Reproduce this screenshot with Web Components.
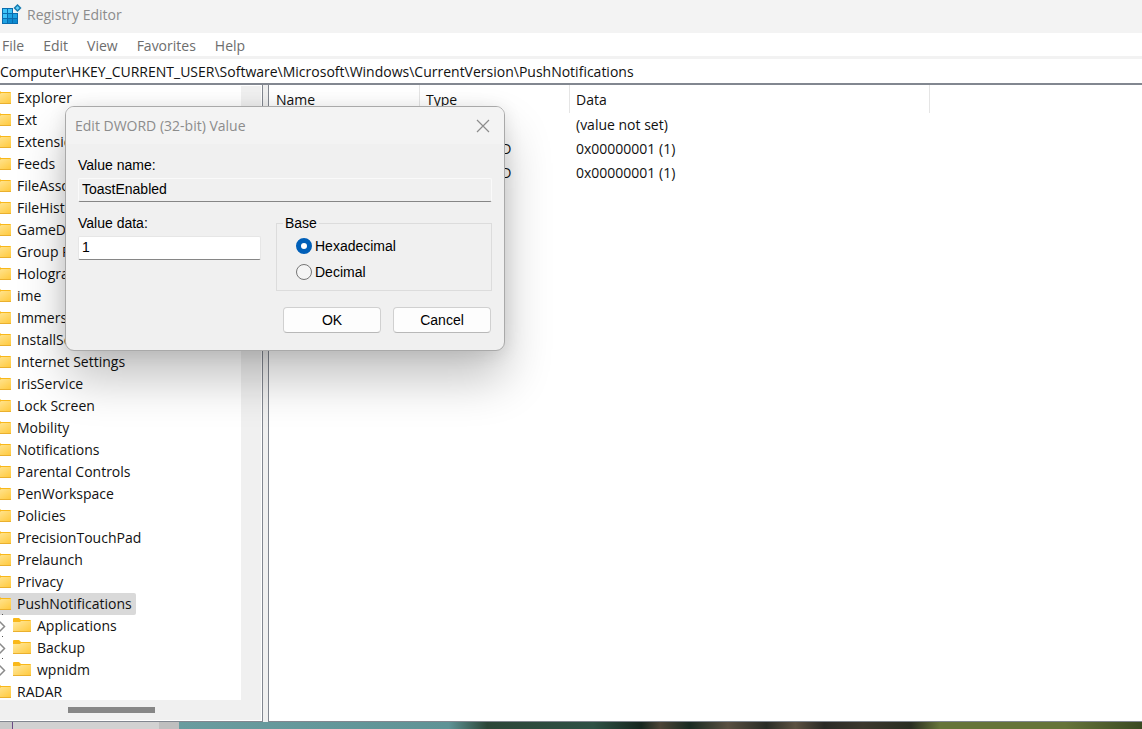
<!DOCTYPE html>
<html lang="en">
<head>
<meta charset="utf-8">
<title>Registry Editor</title>
<style>
  body {
    margin: 0;
    height: 100vh;
    display: flex;
    flex-direction: column;
    overflow: hidden;
    background: #fff;
    color: #111;
    font: 14px/22px "Open Sans", "Noto Sans", sans-serif;
  }
</style>
</head>
<body>

<registry-window></registry-window>
<desktop-strip></desktop-strip>

<dword-dialog name="ToastEnabled" value="1">Edit DWORD (32-bit) Value</dword-dialog>

<script>
class TitleBar extends HTMLElement {
  constructor() {
    super();
    this.attachShadow({ mode: 'open' }).innerHTML = `
    <style>
      :host {
        display: flex;
        align-items: flex-start;
        gap: 4px;
        height: 33px;
        padding-left: 1px;
        background: #f3f3f3;
        color: #8c8c8c;
      }
      svg { margin-top: 4px; }
      span { line-height: 30px; }
    </style>
    <svg width="22" height="20" viewBox="0 0 22 20" aria-hidden="true">
      <path fill="#0a6cae" d="M1 4h11v5h5v11H1z"/>
      <path fill="#3fc3f7" d="M2 5h4v4H2zM7 5h4v4H7zM2 10h4v4H2z"/>
      <path fill="#1fa2e2" d="M7 10h4v4H7zM12 10h4v4h-4zM2 15h4v4H2z"/>
      <path fill="#0d8ad0" d="M7 15h4v4H7zM12 15h4v4h-4z"/>
      <path fill="#1478ae" d="M16.500 0L20.500 4 16.500 8 12.500 4z"/>
      <path fill="#63d0f8" d="M16.500 2L18.500 4 16.500 6 14.500 4z"/>
    </svg>
    <span><slot></slot></span>
    `;
  }
}

class MenuBar extends HTMLElement {
  connectedCallback() {
    const items = this.getAttribute('items').split(',');
    this.attachShadow({ mode: 'open' }).innerHTML = `
    <style>
      :host {
        display: flex;
        gap: 19px;
        padding-left: 2px;
        height: 23px;
        border-bottom: 3px solid #f2f2f2;
        background: #fff;
      }
      button {
        border: 0;
        padding: 0;
        background: none;
        color: #6d6d6d;
        font: inherit;
        line-height: 25px;
      }
    </style>
    ${items.map((item) => `<button type="button">${item}</button>`).join('')}
    `;
  }
}

class AddressBar extends HTMLElement {
  connectedCallback() {
    this.attachShadow({ mode: 'open' }).innerHTML = `
    <style>
      :host {
        display: flex;
        height: 24px;
        border-bottom: 2px solid #828790;
      }
      input {
        flex: 1;
        border: 0;
        padding: 2px 0 0;
        outline: 0;
        background: #fff;
        color: inherit;
        font: inherit;
      }
    </style>
    <input type="text" aria-label="Address" value="${this.getAttribute('path')}">
    `;
  }
}

class TreeItem extends HTMLElement {
  constructor() {
    super();
    this.attachShadow({ mode: 'open' }).innerHTML = `
    <style>
      :host {
        display: flex;
        align-items: center;
        flex: none;
        width: fit-content;
        height: 22px;
        padding-right: 4px;
        white-space: nowrap;
      }
      :host([selected]) {
        background: #d9d9d9;
        border-radius: 2px;
      }
      :host([child]) { padding-left: 4px; }
      .arrow { display: none; overflow: visible; margin-right: 8px; }
      :host([child]) .arrow { display: block; }
      .folder { margin: 0 6px 2px 0; }
    </style>
    <svg class="arrow" width="8" height="22" viewBox="0 0 8 22" aria-hidden="true">
      <path d="M2.500 6.500l5 5-5 5" fill="none" stroke="#8a8a8a" stroke-width="1.500"/>
      <path d="M5 -1h1v1h-1z" fill="#555"/>
    </svg>
    <svg class="folder" width="18" height="14" viewBox="0 0 18 14" aria-hidden="true">
      <defs>
        <linearGradient id="g" x1="0" y1="0" x2="1" y2="1">
          <stop offset="0" stop-color="#ffe9a0"/>
          <stop offset="1" stop-color="#ffc83a"/>
        </linearGradient>
      </defs>
      <path fill="#f9b81a" d="M0 1q0-1 1-1h5l2 2h9q1 0 1 1v10H0z"/>
      <path fill="url(#g)" d="M0 4h7l1-1h10v10q0 1-1 1H1q-1 0-1-1z"/>
      <path fill="#eab02e" d="M0 13h18v1H0z"/>
    </svg>
    <span><slot></slot></span>
    `;
  }
}

class KeyTree extends HTMLElement {
  constructor() {
    super();
    this.attachShadow({ mode: 'open' }).innerHTML = `
    <style>
      :host {
        display: grid;
        grid-template-columns: 1fr 20px;
        grid-template-rows: 1fr 20px;
        width: 261px;
        flex: none;
        border: solid #828790;
        border-width: 0 1px 1px 0;
        padding: 0 1px 1px 0;
        background: #fff;
        overflow: hidden;
      }
      .items {
        display: flex;
        flex-direction: column;
        min-height: 0;
        overflow: hidden;
        padding-top: 2px;
      }
      ::slotted(tree-item) { margin-left: -7px; }
      .vertical { background: #f0f0f0; margin-top: 1px; }
      .horizontal {
        grid-column: 1 / 3;
        display: flex;
        align-items: center;
        background: #f0f0f0;
      }
      .thumb {
        width: 87px;
        height: 6px;
        margin-left: 68px;
        background: #868686;
      }
    </style>
    <div class="items"><slot></slot></div>
    <div class="vertical"></div>
    <div class="horizontal"><div class="thumb"></div></div>
    `;
  }
}

class ValueTable extends HTMLElement {
  connectedCallback() {
    const rows = [
      ['(Default)', 'REG_SZ', '(value not set)'],
      ['ToastEnabled', 'REG_DWORD', '0x00000001 (1)'],
      ['LockScreen', 'REG_DWORD', '0x00000001 (1)'],
    ];
    this.attachShadow({ mode: 'open' }).innerHTML = `
    <style>
      :host {
        display: block;
        flex: 1;
        min-width: 0;
        margin-left: 5px;
        border: solid #828790;
        border-width: 0 0 1px 1px;
        background: #fff;
      }
      table {
        table-layout: fixed;
        width: 661px;
        border-collapse: separate;
        border-spacing: 0;
      }
      th, td {
        box-sizing: border-box;
        height: 24px;
        padding: 0 0 0 6px;
        text-align: left;
        font-weight: normal;
        white-space: nowrap;
      }
      th {
        height: 28px;
        padding-top: 2px;
        border-right: 1px solid #e5e5e5;
      }
      th:first-child, td:first-child { padding-left: 7px; }
    </style>
    <table>
      <colgroup><col style="width: 151px"><col style="width: 150px"><col></colgroup>
      <thead><tr><th>Name</th><th>Type</th><th>Data</th></tr></thead>
      <tbody>
        ${rows.map((row) => `<tr>${row.map((cell) => `<td>${cell}</td>`).join('')}</tr>`).join('')}
      </tbody>
    </table>
    `;
  }
}

class RegistryWindow extends HTMLElement {
  connectedCallback() {
    this.attachShadow({ mode: 'open' }).innerHTML = `
    <style>
      :host {
        display: flex;
        flex-direction: column;
        flex: 1;
        min-height: 0;
      }
      main {
        display: flex;
        flex: 1;
        min-height: 0;
        background: #f0f0f0;
      }
    </style>
    <title-bar>Registry Editor</title-bar>
    <menu-bar items="File,Edit,View,Favorites,Help"></menu-bar>
    <address-bar path="Computer\\HKEY_CURRENT_USER\\Software\\Microsoft\\Windows\\CurrentVersion\\PushNotifications"></address-bar>
    <main>
      <key-tree>
        <tree-item>Explorer</tree-item>
        <tree-item>Ext</tree-item>
        <tree-item>Extensions</tree-item>
        <tree-item>Feeds</tree-item>
        <tree-item>FileAssociations</tree-item>
        <tree-item>FileHistory</tree-item>
        <tree-item>GameDVR</tree-item>
        <tree-item>Group Policy</tree-item>
        <tree-item>Holographic</tree-item>
        <tree-item>ime</tree-item>
        <tree-item>ImmersiveShell</tree-item>
        <tree-item>InstallService</tree-item>
        <tree-item>Internet Settings</tree-item>
        <tree-item>IrisService</tree-item>
        <tree-item>Lock Screen</tree-item>
        <tree-item>Mobility</tree-item>
        <tree-item>Notifications</tree-item>
        <tree-item>Parental Controls</tree-item>
        <tree-item>PenWorkspace</tree-item>
        <tree-item>Policies</tree-item>
        <tree-item>PrecisionTouchPad</tree-item>
        <tree-item>Prelaunch</tree-item>
        <tree-item>Privacy</tree-item>
        <tree-item selected>PushNotifications</tree-item>
        <tree-item child>Applications</tree-item>
        <tree-item child>Backup</tree-item>
        <tree-item child>wpnidm</tree-item>
        <tree-item>RADAR</tree-item>
      </key-tree>
      <value-table></value-table>
    </main>
    `;
  }
}

class DesktopStrip extends HTMLElement {
  constructor() {
    super();
    this.attachShadow({ mode: 'open' }).innerHTML = `
    <style>
      :host {
        display: flex;
        flex: none;
        height: 7px;
      }
      .window {
        width: 179px;
        background: linear-gradient(90deg, #c9c9c9 12px, #6b4a86 12px 13px, #d2d2d2 13px 159px, #bfbfbf 159px);
      }
      .wallpaper {
        flex: 1;
        background: linear-gradient(90deg, #6a9c9f 0, #5f9396 28%, #2c4638 32%, #2f5145 43%, #16261f 48%, #4c4538 50%, #1a2a22 53%, #5a5042 57%, #2a2c26 61%, #5c5142 64%, #2a2a26 67%, #3c382e 71%, #2a2e22 76%, #66743a 79%, #66743a 92%, #3a4a22 100%);
      }
    </style>
    <div class="window"></div>
    <div class="wallpaper"></div>
    `;
  }
}

class DwordDialog extends HTMLElement {
  connectedCallback() {
    this.attachShadow({ mode: 'open' }).innerHTML = `
    <style>
      :host {
        position: absolute;
        left: 65px;
        top: 106px;
        width: 438px;
        border: 1px solid #a9a9a9;
        border-radius: 9px;
        overflow: hidden;
        background: #f0f0f0;
        box-shadow: 0 28px 48px rgba(0, 0, 0, 0.240), 0 2px 18px rgba(0, 0, 0, 0.100);
        color: #000;
        font: 14px/16px "Liberation Sans", Arial, sans-serif;
      }
      header {
        display: flex;
        justify-content: space-between;
        align-items: center;
        height: 37px;
        padding: 0 14px 0 9px;
        background: #f3f3f3;
        color: #8c8c8c;
        font: 14px/22px "Open Sans", "Noto Sans", sans-serif;
      }
      .close {
        display: flex;
        border: 0;
        padding: 0;
        background: none;
      }
      form { padding: 13px 12px 12px; }
      label { display: block; }
      input[type="text"] {
        display: block;
        box-sizing: border-box;
        width: 100%;
        height: 24px;
        margin: 5px 0 0;
        padding: 0 3px 2px;
        border: 1px solid #e6e6e6;
        border-bottom-color: #868686;
        border-radius: 2px;
        outline: 0;
        background: #fff;
        color: inherit;
        font: inherit;
      }
      input[readonly] {
        border-color: #fafafa;
        border-bottom-color: #868686;
        background: #f0f0f0;
      }
      .columns {
        display: grid;
        grid-template-columns: 183px 216px;
        justify-content: space-between;
        margin-top: 13px;
      }
      fieldset {
        margin: 0;
        padding: 2px 0 5px 19px;
        border: 1px solid #dcdcdc;
      }
      legend { margin-left: -13px; padding: 0 2px; }
      .option {
        display: flex;
        align-items: center;
        gap: 3px;
        height: 26px;
      }
      input[type="radio"] {
        appearance: none;
        box-sizing: border-box;
        width: 16px;
        height: 16px;
        margin: 0;
        border: 1px solid #767676;
        border-radius: 50%;
        background: #f5f5f5;
      }
      input[type="radio"]:checked {
        border: 5px solid #005fb8;
        background: #fff;
      }
      footer {
        display: flex;
        justify-content: flex-end;
        gap: 12px;
        padding: 16px 1px 5px 0;
      }
      footer button {
        width: 98px;
        height: 26px;
        border: 1px solid #d0d0d0;
        border-bottom-color: #b8b8b8;
        border-radius: 4px;
        background: #fdfdfd;
        color: inherit;
        font: inherit;
      }
    </style>
    <header>
      <span><slot></slot></span>
      <button class="close" type="button" aria-label="Close">
        <svg width="14" height="14" viewBox="0 0 14 14" aria-hidden="true">
          <path d="M1 1l12 12M13 1L1 13" stroke="#8c8c8c" stroke-width="1.200"/>
        </svg>
      </button>
    </header>
    <form>
      <label for="name">Value name:</label>
      <input id="name" type="text" readonly value="${this.getAttribute('name')}">
      <div class="columns">
        <div>
          <label for="data">Value data:</label>
          <input id="data" type="text" value="${this.getAttribute('value')}">
        </div>
        <fieldset>
          <legend>Base</legend>
          <label class="option"><input type="radio" name="base" checked>Hexadecimal</label>
          <label class="option"><input type="radio" name="base">Decimal</label>
        </fieldset>
      </div>
      <footer>
        <button type="button">OK</button>
        <button type="button">Cancel</button>
      </footer>
    </form>
    `;
    this.setAttribute('role', 'dialog');
  }
}

customElements.define('title-bar', TitleBar);
customElements.define('menu-bar', MenuBar);
customElements.define('address-bar', AddressBar);
customElements.define('tree-item', TreeItem);
customElements.define('key-tree', KeyTree);
customElements.define('value-table', ValueTable);
customElements.define('registry-window', RegistryWindow);
customElements.define('desktop-strip', DesktopStrip);
customElements.define('dword-dialog', DwordDialog);
</script>
</body>
</html>
